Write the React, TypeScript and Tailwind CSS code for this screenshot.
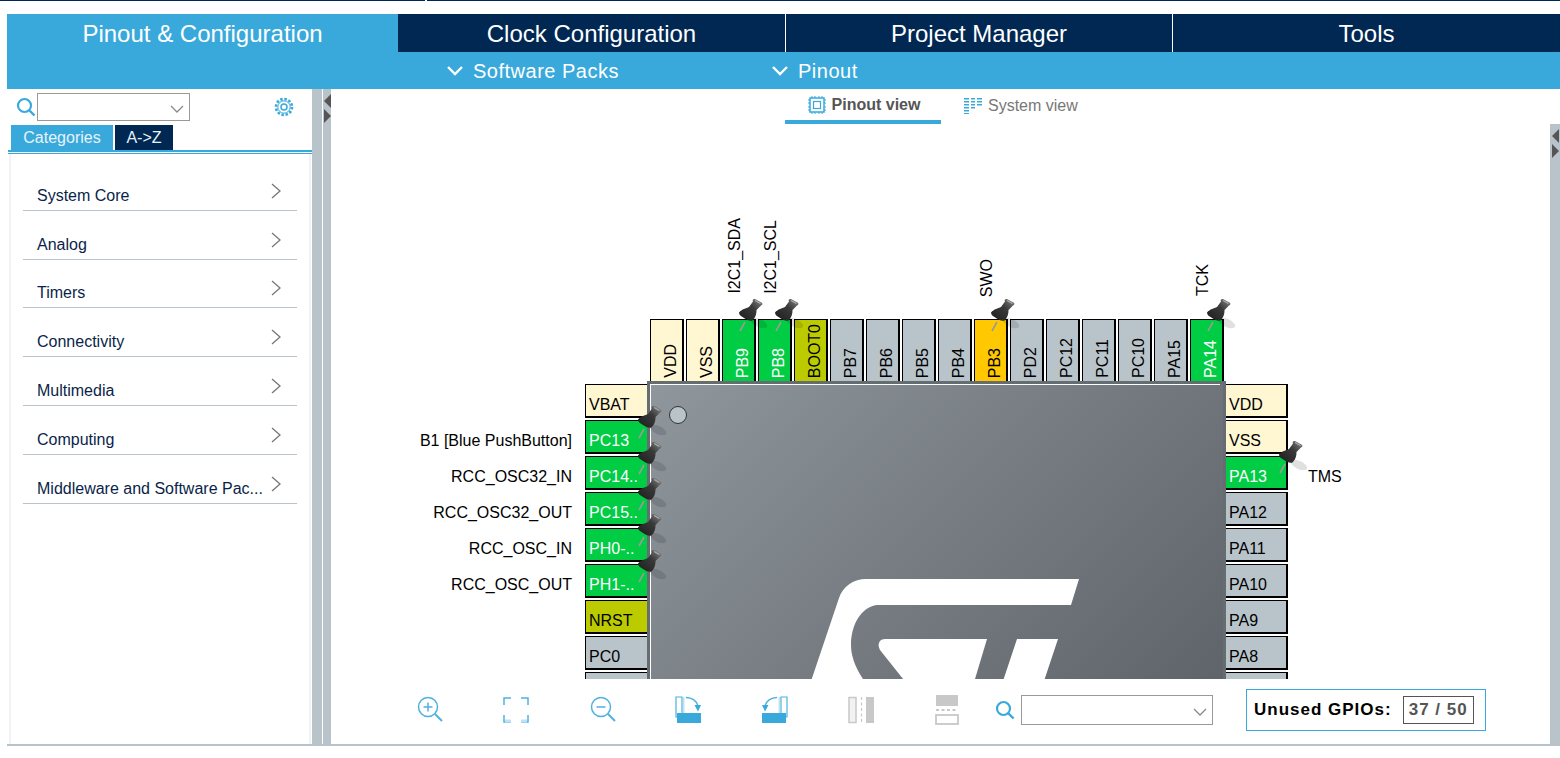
import React from 'react';

type PinKind = 'power' | 'free' | 'used' | 'warn' | 'olive';

interface Pin {
  name: string;
  kind: PinKind;
  pinned?: boolean;
}

const kindStyles: Record<PinKind, string> = {
  power: 'bg-[#fff6d2] text-black',
  free: 'bg-[#b9c4ca] text-black',
  used: 'bg-[#00cc44] text-white',
  warn: 'bg-[#ffc800] text-black',
  olive: 'bg-[#bccb00] text-black',
};

const topPins: Pin[] = [
  { name: 'VDD', kind: 'power' },
  { name: 'VSS', kind: 'power' },
  { name: 'PB9', kind: 'used', pinned: true },
  { name: 'PB8', kind: 'used', pinned: true },
  { name: 'BOOT0', kind: 'olive' },
  { name: 'PB7', kind: 'free' },
  { name: 'PB6', kind: 'free' },
  { name: 'PB5', kind: 'free' },
  { name: 'PB4', kind: 'free' },
  { name: 'PB3', kind: 'warn', pinned: true },
  { name: 'PD2', kind: 'free' },
  { name: 'PC12', kind: 'free' },
  { name: 'PC11', kind: 'free' },
  { name: 'PC10', kind: 'free' },
  { name: 'PA15', kind: 'free' },
  { name: 'PA14', kind: 'used', pinned: true },
];

const leftPins: Pin[] = [
  { name: 'VBAT', kind: 'power' },
  { name: 'PC13', kind: 'used', pinned: true },
  { name: 'PC14..', kind: 'used', pinned: true },
  { name: 'PC15..', kind: 'used', pinned: true },
  { name: 'PH0-..', kind: 'used', pinned: true },
  { name: 'PH1-..', kind: 'used', pinned: true },
  { name: 'NRST', kind: 'olive' },
  { name: 'PC0', kind: 'free' },
  { name: 'PC1', kind: 'free' },
];

const rightPins: Pin[] = [
  { name: 'VDD', kind: 'power' },
  { name: 'VSS', kind: 'power' },
  { name: 'PA13', kind: 'used' },
  { name: 'PA12', kind: 'free' },
  { name: 'PA11', kind: 'free' },
  { name: 'PA10', kind: 'free' },
  { name: 'PA9', kind: 'free' },
  { name: 'PA8', kind: 'free' },
  { name: 'PC9', kind: 'free' },
];

const topLabels = [
  { text: 'I2C1_SDA', x: 404, bottom: 294 },
  { text: 'I2C1_SCL', x: 440, bottom: 294 },
  { text: 'SWO', x: 656, bottom: 297 },
  { text: 'TCK', x: 872, bottom: 296 },
];

const leftLabels = ['B1 [Blue PushButton]', 'RCC_OSC32_IN', 'RCC_OSC32_OUT', 'RCC_OSC_IN', 'RCC_OSC_OUT'];

const categories = ['System Core', 'Analog', 'Timers', 'Connectivity', 'Multimedia', 'Computing', 'Middleware and Software Pac...'];

// canvas origin in page coordinates
const OX = 332;
const OY = 124;

function PushPin({ x, y }: { x: number; y: number }) {
  return (
    <svg className="absolute z-20" style={{ left: x - OX, top: y - OY }} width="36" height="38" viewBox="0 0 36 38">
      <defs>
        <linearGradient id="pinBody" x1="0" y1="1" x2="1" y2="0">
          <stop offset="0" stopColor="#1c1c1c" />
          <stop offset="0.6" stopColor="#3a3a3a" />
          <stop offset="1" stopColor="#8a8a8a" />
        </linearGradient>
      </defs>
      <ellipse cx="21" cy="25" rx="9" ry="4" fill="#000" opacity="0.12" transform="rotate(25 21 25)" />
      <path d="M2 33 L7 24" stroke="#9a9a9a" strokeWidth="1.6" />
      <path d="M1 14.5 C4 11 8 10.5 11 9 L15 3.5 C14 2 15.5 0.5 17 1 L23.5 4.5 C25 5.5 24.5 7 23 7.5 L18.5 12 C18.5 15 18 19 15 22 C13 24 9 22 6 20 C3.5 18.500 1 17 1 14.500 Z" fill="url(#pinBody)" />
      <path d="M17 2.500 L22.500 5.500" stroke="#b0b0b0" strokeWidth="1.200" />
    </svg>
  );
}

function TopPin({ pin, index }: { pin: Pin; index: number }) {
  return (
    <div
      className={`absolute w-[34px] h-[63px] border-t border-l border-r-2 border-black flex items-center justify-start ${kindStyles[pin.kind]}`}
      style={{ left: 651 - OX + index * 36, top: 319 - OY }}
    >
      <span className="[writing-mode:vertical-rl] rotate-180 text-[16px] leading-[18px] ml-[11px] mt-auto mb-[4px]">{pin.name}</span>
    </div>
  );
}

function SidePin({ pin, index, side }: { pin: Pin; index: number; side: 'left' | 'right' }) {
  const edge = side === 'left' ? 'border-l border-r-0' : 'border-r-2';
  return (
    <div
      className={`absolute w-[62px] h-[34px] border-t border-b-2 border-black ${edge} flex items-end pl-[3px] pb-[2px] text-[16px] leading-[18px] ${kindStyles[pin.kind]}`}
      style={{ left: (side === 'left' ? 586 : 1227) - OX, top: 384 - OY + index * 36 }}
    >
      {pin.name}
    </div>
  );
}

function StLogo() {
  return (
    <svg className="absolute" style={{ left: 800 - OX, top: 570 - OY }} width="300" height="130" viewBox="800 570 300 130">
      <path
        fill="#fff"
        d="M806 699 L840 598 C844 586 855 579 867 579 L1080 579 L1072 605 L878 605 C862 607 852 625 852 645 C852 656 856 668 868 685 L873 699 Z"
      />
      <path fill="#fff" d="M920 699 L881 650 C878 645 880 639 886 639 L988 639 L970 699 Z" />
      <path fill="#fff" d="M998 699 L1018 639 L1059 639 L1039 699 Z" />
    </svg>
  );
}

function Chevron({ className }: { className: string }) {
  return (
    <svg className={className} width="14" height="8" viewBox="0 0 14 8" fill="none" stroke="#8a8a8a" strokeWidth="1.3">
      <path d="M1 1 L7 7 L13 1" />
    </svg>
  );
}

function SearchIcon() {
  return (
    <svg width="20" height="20" viewBox="0 0 20 20" fill="none" stroke="#39a9dc">
      <circle cx="8.500" cy="8.500" r="6.500" strokeWidth="2.200" />
      <path d="M13 13 L18.500 18.500" strokeWidth="2.400" />
    </svg>
  );
}

function GearIcon() {
  return (
    <svg width="20" height="20" viewBox="0 0 20 20" fill="none" stroke="#39a9dc">
      <circle cx="10" cy="10" r="8" strokeWidth="2.600" strokeDasharray="2.500 1.700" />
      <circle cx="10" cy="10" r="6.200" strokeWidth="1" />
      <circle cx="10" cy="10" r="3" strokeWidth="1.500" />
    </svg>
  );
}

function ZoomIcon({ plus }: { plus: boolean }) {
  return (
    <svg width="26" height="28" viewBox="0 0 26 28" fill="none" stroke="#4db1e0" strokeWidth="1.500">
      <circle cx="11" cy="11" r="9.500" />
      <path d="M6.500 11 H15.500" />
      {plus && <path d="M11 6.500 V15.500" />}
      <path d="M18 18 L25 25" strokeWidth="2" />
    </svg>
  );
}

function FitIcon() {
  return (
    <svg width="26" height="26" viewBox="0 0 26 26" fill="none" stroke="#4db1e0" strokeWidth="1.500">
      <path d="M1 8 V1 H8 M18 1 H25 V8 M25 18 V25 H18 M8 25 H1 V18" />
      <path d="M2 24 H8 M18 24 H24" stroke="#bfe2f4" strokeWidth="3" />
    </svg>
  );
}

function RotateIcon({ flip }: { flip?: boolean }) {
  return (
    <svg className={flip ? '-scale-x-100' : ''} width="26" height="28" viewBox="0 0 26 28" fill="none">
      <path d="M1 1 H7 V21 H1 Z" stroke="#4db1e0" strokeWidth="1.200" />
      <path d="M8 1 H9.500 V17 H8 Z" fill="#bfe2f4" />
      <rect x="2" y="17" width="24" height="10" fill="#39a9dc" />
      <path d="M11 1.500 C17 1.500 22 5 23 10" stroke="#4db1e0" strokeWidth="1.500" />
      <path d="M19.500 9 L26 9 L23 15.500 Z" fill="#39a9dc" />
    </svg>
  );
}

function FlipHIcon() {
  return (
    <svg width="26" height="28" viewBox="0 0 26 28" fill="none">
      <rect x="1" y="1.500" width="7" height="25" fill="#f2f2f2" stroke="#c8c8c8" strokeWidth="1.500" />
      <path d="M13.500 1 V27" stroke="#c8c8c8" strokeWidth="1.200" strokeDasharray="3 2.500" />
      <rect x="18" y="1" width="8" height="26" fill="#c8c8c8" />
    </svg>
  );
}

function FlipVIcon() {
  return (
    <svg width="24" height="30" viewBox="0 0 24 30" fill="none">
      <rect x="1" y="0" width="22" height="11" fill="#c8c8c8" />
      <path d="M1 15 H23" stroke="#c8c8c8" strokeWidth="2" strokeDasharray="3 2.500" />
      <rect x="1" y="20" width="22" height="9" fill="#fff" stroke="#c8c8c8" strokeWidth="1.800" />
    </svg>
  );
}

function ChipIcon() {
  return (
    <svg width="18" height="18" viewBox="0 0 18 18" fill="none" stroke="#39a9dc">
      <rect x="2" y="2" width="14" height="14" strokeWidth="1.500" />
      <rect x="5.500" y="5.500" width="7" height="7" strokeWidth="1.200" />
      <path d="M4 0 V2 M7 0 V2 M11 0 V2 M14 0 V2 M4 16 V18 M7 16 V18 M11 16 V18 M14 16 V18 M0 4 H2 M0 7 H2 M0 11 H2 M0 14 H2 M16 4 H18 M16 7 H18 M16 11 H18 M16 14 H18" strokeWidth="1" />
    </svg>
  );
}

function SystemIcon() {
  return (
    <svg width="18" height="16" viewBox="0 0 18 16" fill="#39a9dc">
      <path d="M0 0 H5 V1.500 H0 Z M0 3 H5 V4.500 H0 Z M0 6 H5 V7.500 H0 Z M0 9 H5 V10.500 H0 Z M0 12 H5 V13.500 H0 Z M0 15 H5 V16 H0 Z" />
      <path d="M7 0 H11 V1.500 H7 Z M7 3 H11 V4.500 H7 Z M7 6 H11 V7.500 H7 Z M7 9 H11 V10.500 H7 Z" />
      <path d="M13 0 H18 V1.500 H13 Z M13 3 H18 V4.500 H13 Z M13 6 H18 V7.500 H13 Z" />
    </svg>
  );
}

function CollapseHandle() {
  return (
    <div className="flex flex-col items-center pt-[5px] gap-[1px]">
      <div className="w-0 h-0 border-y-[7px] border-y-transparent border-r-[7px] border-r-[#555]" />
      <div className="w-0 h-0 border-y-[7px] border-y-transparent border-l-[7px] border-l-[#555]" />
    </div>
  );
}

export default function App() {
  return (
    <div className="w-[1560px] h-[758px] bg-white overflow-hidden font-['Liberation_Sans',Arial,sans-serif]">
      {/* top strip */}
      <div className="h-[14px]">
        <div className="flex h-[1px]">
          <div className="w-[425px] bg-[#002852]" />
          <div className="w-[2px]" />
          <div className="flex-1 bg-[#002852]" />
        </div>
      </div>

      {/* main tabs */}
      <div className="flex h-[38px] ml-[7px] text-[24px] leading-[40px] text-white">
        <div className="w-[391px] bg-[#39a9dc] text-center">Pinout &amp; Configuration</div>
        <div className="w-[387px] bg-[#002852] text-center">Clock Configuration</div>
        <div className="w-[1px]" />
        <div className="w-[386px] bg-[#002852] text-center">Project Manager</div>
        <div className="w-[1px]" />
        <div className="flex-1 bg-[#002852] text-center">Tools</div>
      </div>

      {/* sub bar */}
      <div className="relative flex h-[37px] ml-[7px] bg-[#39a9dc] text-white text-[20px] tracking-[0.5px] items-center">
        <div className="flex items-center ml-[440px] w-[325px]">
          <svg className="mr-[10px]" width="16" height="10" viewBox="0 0 16 10" fill="none" stroke="#fff" strokeWidth="2.400">
            <path d="M1 1 L8 8 L15 1" />
          </svg>
          Software Packs
        </div>
        <div className="flex items-center">
          <svg className="mr-[10px]" width="16" height="10" viewBox="0 0 16 10" fill="none" stroke="#fff" strokeWidth="2.400">
            <path d="M1 1 L8 8 L15 1" />
          </svg>
          Pinout
        </div>
      </div>

      <div className="flex h-[657px] ml-[7px] border-b-2 border-[#b9c4ca]">
        {/* left panel */}
        <aside className="w-[305px] flex flex-col pl-[1px]">
          <div className="h-[36px] flex items-center pl-[8px] pr-[18px]">
            <SearchIcon />
            <div className="relative w-[153px] h-[28px] ml-[1px] border border-[#999]">
              <Chevron className="absolute right-[5px] top-[11px]" />
            </div>
            <div className="ml-auto">
              <GearIcon />
            </div>
          </div>
          <div className="flex h-[25px] pl-[3px] text-[16px] leading-[26px] text-[#e6f3fa]">
            <div className="w-[102px] bg-[#39a9dc] text-center">Categories</div>
            <div className="w-[2px]" />
            <div className="w-[58px] bg-[#002852] text-center">A-&gt;Z</div>
          </div>
          <div className="h-[4px] border-t-2 border-b border-[#39a9dc]" />
          <div className="flex-1 mx-[1px] border-x-2 border-[#f0f2f3] px-[12px] pt-[8px]">
            {categories.map((c) => (
              <div key={c} className="h-[48.8px] flex items-end justify-between border-b border-[#b9c4ca] text-[16px] leading-[18px] text-[#0a1f4a] pl-[14px] pr-[16px] pb-[5px]">
                <span>{c}</span>
                <svg className="mb-[6px]" width="10" height="16" viewBox="0 0 10 16" fill="none" stroke="#777" strokeWidth="1.300">
                  <path d="M1 1 L9 8 L1 15" />
                </svg>
              </div>
            ))}
          </div>
        </aside>

        {/* splitter */}
        <div className="w-[10px] bg-[#b9c4ca]" />
        <div className="w-[1px]" />
        <div className="w-[8px] bg-[#b9c4ca]">
          <CollapseHandle />
        </div>

        {/* main column */}
        <main className="flex-1 flex flex-col">
          <div className="h-[35px] flex pl-[454px] text-[16px]">
            <div className="w-[156px] h-[35px] border-b-[4px] border-[#39a9dc] flex items-center justify-center gap-[6px] font-bold text-[#555] pl-[2px]">
              <ChipIcon />
              Pinout view
            </div>
            <div className="ml-[23px] h-[35px] flex items-center gap-[6px] text-[#777] pb-[2px]">
              <SystemIcon />
              System view
            </div>
          </div>

          <div className="flex flex-1 min-h-0">
            <div className="flex-1 flex flex-col min-w-0">
              {/* pinout canvas */}
              <div className="relative h-[555px] overflow-hidden">
                {topLabels.map((l) => (
                  <span
                    key={l.text}
                    className="absolute [writing-mode:vertical-rl] rotate-180 text-[16px] leading-[18px] text-black"
                    style={{ left: l.x - 9 + 332 - OX, bottom: 555 - (l.bottom - OY) }}
                  >
                    {l.text}
                  </span>
                ))}
                {topPins.map((p, i) => (
                  <TopPin key={p.name} pin={p} index={i} />
                ))}
                {leftPins.map((p, i) => (
                  <SidePin key={p.name} pin={p} index={i} side="left" />
                ))}
                {rightPins.map((p, i) => (
                  <SidePin key={p.name} pin={p} index={i} side="right" />
                ))}

                {/* chip */}
                <div className="absolute w-[579px] h-[579px] bg-linear-to-br from-[#8f969c] to-[#50555a] border-[3px] border-[#666d70]" style={{ left: 648 - OX, top: 381 - OY }}>
                  <div className="h-full border-t border-l border-white mr-[3px]">
                    <div className="w-[18px] h-[18px] rounded-full bg-[#b9c4ca] border border-[#333] ml-[18px] mt-[21px]" />
                  </div>
                </div>
                <StLogo />

                {leftLabels.map((l, i) => (
                  <span key={l} className="absolute right-[978px] text-[16px] leading-[18px] text-black whitespace-nowrap" style={{ top: 432 - OY + i * 36 }}>
                    {l}
                  </span>
                ))}
                <span className="absolute text-[16px] leading-[18px] text-black" style={{ left: 1309 - OX, top: 468 - OY }}>
                  TMS
                </span>

                {[0, 1, 2, 3, 4].map((i) => (
                  <PushPin key={i} x={638} y={405 + i * 36} />
                ))}
                <PushPin x={739} y={298} />
                <PushPin x={775} y={298} />
                <PushPin x={991} y={298} />
                <PushPin x={1207} y={298} />
                <PushPin x={1279} y={440} />
              </div>

              {/* toolbar */}
              <div className="flex-1 flex items-start relative">
                <div className="flex items-center h-[42px] mt-[10px] pl-[86px] w-full">
                  <div className="w-[86px]"><ZoomIcon plus /></div>
                  <div className="w-[87px]"><FitIcon /></div>
                  <div className="w-[85px]"><ZoomIcon plus={false} /></div>
                  <div className="w-[87px]"><RotateIcon /></div>
                  <div className="w-[86px]"><RotateIcon flip /></div>
                  <div className="w-[87px]"><FlipHIcon /></div>
                  <div className="w-[60px]"><FlipVIcon /></div>
                  <SearchIcon />
                  <div className="relative w-[192px] h-[30px] ml-[6px] border border-[#999]">
                    <Chevron className="absolute right-[5px] top-[12px]" />
                  </div>
                  <div className="w-[240px] h-[42px] ml-[33px] border border-[#39a9dc] flex items-center pl-[7px] font-bold">
                    <span className="text-[17px] tracking-[1px] text-black">Unused GPIOs:</span>
                    <span className="ml-[11px] w-[71px] h-[28px] border border-[#555] text-[#555] text-[17px] tracking-[1px] flex items-center justify-center">37 / 50</span>
                  </div>
                </div>
              </div>
            </div>

            {/* right collapse bar */}
            <div className="w-[10px] bg-[#b9c4ca] shrink-0 -mb-[2px]">
              <CollapseHandle />
            </div>
          </div>
        </main>
      </div>
    </div>
  );
}
